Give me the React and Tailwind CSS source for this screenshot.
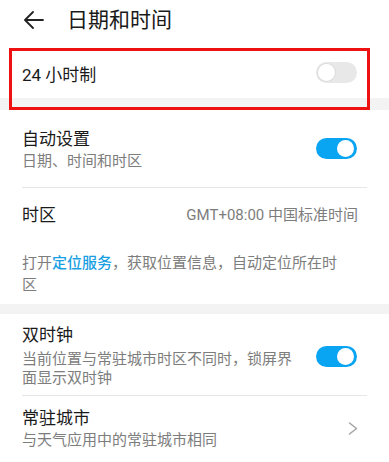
import React from 'react';

const font = { fontFamily: '"Roboto", "Noto Sans CJK SC", sans-serif' };

function Toggle({ on }) {
  return (
    <div
      className={
        'relative h-[21px] w-[41px] shrink-0 rounded-full ' +
        (on ? 'bg-[#0aa5f2]' : 'bg-[#e8e8e8]')
      }
    >
      <div
        className={
          'absolute top-[2px] h-[17px] w-[17px] rounded-full bg-white ' +
          (on ? 'right-[3px]' : 'left-[2px] shadow-[0_0_0_1px_#dcdcdc]')
        }
      />
    </div>
  );
}

function Divider() {
  return <div className="mx-[22px] h-px bg-[#e6e6e6]" />;
}

export default function App() {
  return (
    <div className="relative h-[462px] w-[389px] overflow-hidden bg-white text-[#1a1a1a]" style={font}>
      {/* header */}
      <div className="flex h-[48px] items-start pt-[6px]">
        <svg width="20" height="18" viewBox="0 0 20 18" className="ml-[24px] mt-[5px]" fill="none" stroke="#222" strokeWidth="1.8" strokeLinecap="round" strokeLinejoin="round">
          <path d="M19 9H1.5M9 1L1 9l8 8" />
        </svg>
        <span className="ml-[23px] text-[21px] leading-[28px]">日期和时间</span>
      </div>

      {/* 24h row */}
      <div className="flex h-[50px] items-center justify-between pl-[22px] pr-[32px]">
        <span className="mt-[3px] text-[17px] leading-[22px]">24 小时制</span>
        <div className="mt-[-2px]">
          <Toggle on={false} />
        </div>
      </div>
      <div className="h-[12px] bg-[#f3f3f3]" />

      {/* annotation box */}
      <div className="absolute left-[9px] top-[48px] h-[62px] w-[361px] border-[3px] border-[#ee1111]" />

      {/* auto setting */}
      <div className="flex h-[77px] items-center justify-between pl-[22px] pr-[32px]">
        <div className="pt-[2px]">
          <div className="text-[17px] leading-[22px]">自动设置</div>
          <div className="mt-[1px] text-[15px] leading-[20px] text-[#7d7d7d]">日期、时间和时区</div>
        </div>
        <Toggle on />
      </div>
      <Divider />
      <div className="flex h-[54px] items-center justify-between pl-[22px] pr-[31px]">
        <span className="text-[17px] leading-[22px]">时区</span>
        <span className="text-[15px] leading-[20px] text-[#7d7d7d]">GMT+08:00 中国标准时间</span>
      </div>
      <div className="pb-[8px] pl-[22px] pr-[40px] pt-[10px] text-[15px] leading-[22px] text-[#7d7d7d]">
        打开<span className="font-medium text-[#1a9fe2]">定位服务</span>，获取位置信息，自动定位所在时区
      </div>
      <div className="h-[10px] bg-[#f3f3f3]" />

      {/* dual clock */}
      <div className="flex items-center gap-[16px] pb-[7px] pl-[22px] pr-[32px] pt-[10px]">
        <div className="flex-1">
          <div className="text-[17px] leading-[22px]">双时钟</div>
          <div className="mt-[4px] text-[15px] leading-[19px] text-[#7d7d7d]">
            当前位置与常驻城市时区不同时，锁屏界面显示双时钟
          </div>
        </div>
        <Toggle on />
      </div>
      <Divider />
      <div className="flex items-center justify-between pl-[22px] pr-[31px] pt-[11px]">
        <div>
          <div className="text-[17px] leading-[22px]">常驻城市</div>
          <div className="mt-[1px] text-[15px] leading-[20px] text-[#7d7d7d]">与天气应用中的常驻城市相同</div>
        </div>
        <svg width="10" height="13" viewBox="0 0 10 13" fill="none" stroke="#a3a3a3" strokeWidth="1.5" strokeLinecap="round" strokeLinejoin="round">
          <path d="M1.5 1l7 5.5-7 5.5" />
        </svg>
      </div>
    </div>
  );
}
